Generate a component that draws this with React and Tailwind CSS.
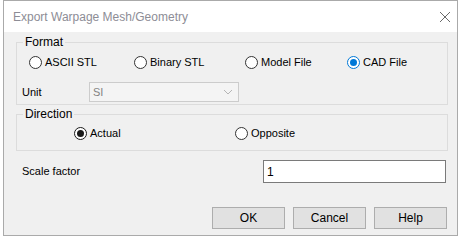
const FONT = { fontFamily: '"Liberation Sans", Arial, sans-serif' }

function Radio({ label, checked, tone = 'blue', width }) {
  const ring = checked
    ? tone === 'blue' ? 'border-[#0078d7]' : 'border-[#1a1a1a]'
    : 'border-[#333333]'
  const dot = tone === 'blue' ? 'bg-[#0078d7]' : 'bg-[#1a1a1a]'
  return (
    <label className={`flex items-center h-[14px] ${width}`}>
      <span className={`w-[13px] h-[13px] rounded-full border bg-white flex items-center justify-center shrink-0 ${ring}`}>
        {checked && <span className={`w-[7px] h-[7px] rounded-full ${dot}`} />}
      </span>
      <span className="ml-[3px] text-[11px] text-black leading-none">{label}</span>
    </label>
  )
}

export default function App() {
  return (
    <div className="w-[461px] h-[240px] bg-white" style={FONT}>
      <div className="ml-[3px] w-[455px] h-[236px] border border-[#aaaaaa] flex flex-col">
        {/* Title bar */}
        <div className="h-[31px] bg-white flex items-center pl-[9px] pr-[6px] shrink-0">
          <span className="text-[12px] text-[#8d8d96]">Export Warpage Mesh/Geometry</span>
          <svg className="ml-auto" width="12" height="12" viewBox="0 0 12 12">
            <path d="M1 1 L11 11 M11 1 L1 11" stroke="#6a6a6a" strokeWidth="1" />
          </svg>
        </div>

        {/* Body */}
        <div className="flex-1 bg-[#f0f0f0] pl-[12px] pt-[3px]">
          <fieldset className="w-[432px] border border-[#dcdcdc] pb-[2px]">
            <legend className="ml-[6px] px-[2px] text-[12px] font-normal leading-[14px] text-black">Format</legend>
            <div className="flex mt-[6px] pl-[12px]">
              <Radio label="ASCII STL" width="w-[105px]" />
              <Radio label="Binary STL" width="w-[111px]" />
              <Radio label="Model File" width="w-[102px]" />
              <Radio label="CAD File" checked tone="blue" />
            </div>
            <div className="flex items-center mt-[13px] pl-[5px]">
              <span className="w-[67px] text-[11px] text-black">Unit</span>
              <div className="w-[150px] h-[20px] border border-[#cccccc] bg-[#f4f4f4] flex items-center">
                <span className="pl-[3px] text-[11px] text-[#838383] flex-1">SI</span>
                <svg className="mr-[4px]" width="12" height="8" viewBox="0 0 12 8">
                  <path d="M2 2 L6 6 L10 2" stroke="#b5b5b5" strokeWidth="1" fill="none" />
                </svg>
              </div>
            </div>
          </fieldset>

          <fieldset className="w-[432px] mt-[2px] border border-[#dcdcdc] pb-[10px]">
            <legend className="ml-[6px] px-[2px] text-[12px] font-normal leading-[14px] text-black">Direction</legend>
            <div className="flex mt-[5px] pl-[57px]">
              <Radio label="Actual" checked tone="black" width="w-[161px]" />
              <Radio label="Opposite" />
            </div>
          </fieldset>

          <div className="flex items-center mt-[9px] ml-[6px]">
            <span className="w-[241px] text-[11px] text-black">Scale factor</span>
            <div className="w-[183px] h-[23px] border border-[#7a7a7a] bg-white flex items-center pl-[3px] text-[12px] text-black">1</div>
          </div>

          <div className="flex gap-[8px] mt-[24px] ml-[196px]">
            {['OK', 'Cancel', 'Help'].map((t) => (
              <button key={t} className="w-[73px] h-[22px] border border-[#adadad] bg-[#e1e1e1] text-[12px] text-black">{t}</button>
            ))}
          </div>
        </div>
      </div>
    </div>
  )
}
